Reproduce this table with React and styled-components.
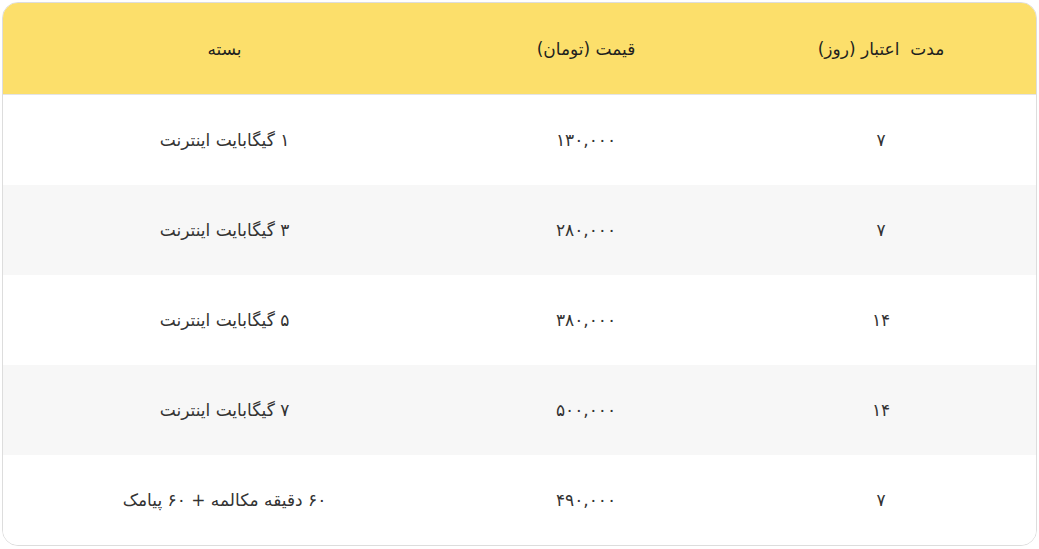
import React from 'react';
import styled, { createGlobalStyle } from 'styled-components';

const GlobalStyle = createGlobalStyle`
    body {
        margin: 0;
        background: #fff;
        font-family: "DejaVu Sans", "Noto Sans", sans-serif;
    }
`;

const Page = styled.div`
    padding: 2px 2px 0 2px;
`;

const Table = styled.div`
    direction: rtl;
    border: 1px solid #dddddd;
    border-radius: 16px;
    overflow: hidden;
    background: #fff;
`;

const Row = styled.div`
    display: grid;
    grid-template-columns: 310px 280px 1fr;
    height: ${props => props.head ? '91px' : '90px'};
    background: ${props => props.head ? '#fcdf6b' : props.striped ? '#f7f7f7' : '#fff'};
    border-bottom: ${props => props.head ? '1px solid #e4e4e4' : 'none'};
`;

const Cell = styled.div`
    display: flex;
    align-items: center;
    justify-content: center;
    font-size: 17px;
    color: ${props => props.head ? '#1f1f1f' : '#333'};
    white-space: pre;
`;

const rows = [
    { days: '۷', price: '۱۳۰,۰۰۰', pack: '۱ گیگابایت اینترنت' },
    { days: '۷', price: '۲۸۰,۰۰۰', pack: '۳ گیگابایت اینترنت' },
    { days: '۱۴', price: '۳۸۰,۰۰۰', pack: '۵ گیگابایت اینترنت' },
    { days: '۱۴', price: '۵۰۰,۰۰۰', pack: '۷ گیگابایت اینترنت' },
    { days: '۷', price: '۴۹۰,۰۰۰', pack: '۶۰ دقیقه مکالمه + ۶۰ پیامک' },
];

export default function App() {
    return (
        <Page>
            <GlobalStyle />
            <Table>
                <Row head>
                    <Cell head>مدت  اعتبار (روز)</Cell>
                    <Cell head>قیمت (تومان)</Cell>
                    <Cell head>بسته</Cell>
                </Row>
                {rows.map((r, i) => (
                    <Row key={i} striped={i % 2 === 1}>
                        <Cell>{r.days}</Cell>
                        <Cell>{r.price}</Cell>
                        <Cell>{r.pack}</Cell>
                    </Row>
                ))}
            </Table>
        </Page>
    );
}
